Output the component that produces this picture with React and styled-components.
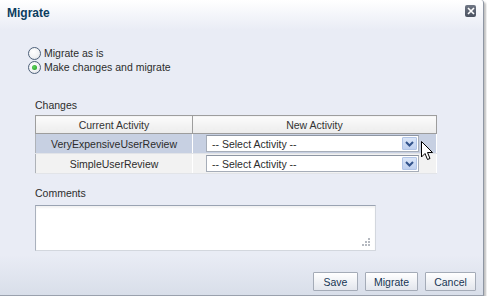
import React from "react";
import styled, { createGlobalStyle } from "styled-components";

const GlobalStyle = createGlobalStyle`
  html, body {
    margin: 0;
    padding: 0;
    background: #fff;
  }
  body {
    font-family: "Liberation Sans", Arial, sans-serif;
    font-size: 10.5px;
    color: #2c2c2c;
  }
`;

const Dialog = styled.div`
  position: relative;
  width: 484px;
  height: 296px;
  box-sizing: border-box;
  display: flex;
  flex-direction: column;
  background: linear-gradient(to bottom, #ffffff 0px, #e9ecf5 30px, #e9ecf5 255px, #d8dee9 296px);
  border-right: 1px solid #8e96a3;
  border-bottom: 1px solid #9aa1ad;
  border-top-right-radius: 3px;
  box-shadow: 2px 2px 2px rgba(0, 0, 0, 0.25);
`;

const TitleBar = styled.div`
  height: 28px;
  display: flex;
  align-items: center;
  justify-content: space-between;
  padding: 0 7px 3px 7px;
  box-sizing: border-box;
`;

const Title = styled.div`
  font-size: 12px;
  font-weight: bold;
  color: #0b3d5e;
`;

const CloseButton = styled.div`
  width: 11px;
  height: 12px;
  margin-top: -4px;
  border-radius: 2px;
  background: linear-gradient(to bottom, #6f7684, #4b5260);
  display: flex;
  align-items: center;
  justify-content: center;
`;

const Content = styled.div`
  padding-left: 28px;
  display: flex;
  flex-direction: column;
`;

const RadioList = styled.div`
  margin-top: 18px;
  display: flex;
  flex-direction: column;
`;

const RadioRow = styled.label`
  height: 14px;
  display: flex;
  align-items: center;
  gap: 3px;
`;

const RadioCircle = styled.span`
  width: 11px;
  height: 11px;
  border-radius: 50%;
  border: 1px solid #4d6079;
  background: radial-gradient(circle at 40% 35%, #ffffff 0%, #f1f2f4 55%, #d2d6de 100%);
  display: flex;
  align-items: center;
  justify-content: center;

  &::after {
    content: "";
    width: 5px;
    height: 5px;
    border-radius: 50%;
    background: ${(p) => (p.checked ? "radial-gradient(circle at 40% 40%, #5fd35f, #1f9a1f)" : "transparent")};
  }
`;

const Section = styled.div`
  margin-left: 7px;
  display: flex;
  flex-direction: column;
`;

const Label = styled.div`
  line-height: 14px;
  margin-top: ${(p) => p.top}px;
`;

const Grid = styled.table`
  margin-top: 3px;
  width: 402px;
  border-collapse: collapse;
  border: 1px solid #aeb2b8;
`;

const Th = styled.th`
  height: 17px;
  padding: 0;
  font-weight: normal;
  text-align: center;
  color: #333;
  background: linear-gradient(to bottom, #fbfbfb, #ececec);
  border: 1px solid #9d9d9d;
  width: ${(p) => p.width}px;
`;

const Td = styled.td`
  height: 19px;
  padding: 0;
  text-align: center;
  background: ${(p) => (p.selected ? "#c7d0e2" : "#f2f2f2")};
  border-right: 1px solid #ffffff;
  border-bottom: 1px solid #e2e4e8;
`;

const SelectCell = styled.div`
  display: flex;
  padding: 0 17px 0 13px;
`;

const SelectBox = styled.div`
  flex: 1;
  height: 17px;
  box-sizing: border-box;
  display: flex;
  align-items: center;
  justify-content: space-between;
  padding: 0 1px 0 5px;
  background: #fff;
  border: 1px solid #a6adb8;
  border-top-color: #8e96a3;
  text-align: left;
`;

const ArrowButton = styled.span`
  width: 15px;
  height: 13px;
  box-sizing: border-box;
  border: 1px solid #b1c4e6;
  border-radius: 1px;
  background: linear-gradient(to bottom, #dbe6f8, #bfd0ef);
  display: flex;
  align-items: center;
  justify-content: center;
`;

const TextArea = styled.div`
  position: relative;
  margin-top: 5px;
  width: 341px;
  height: 46px;
  box-sizing: border-box;
  background: #fff;
  border: 1px solid #d3d7de;
  border-top-color: #9aa3b2;
  border-left-color: #aab1bd;
  box-shadow: inset 0 2px 2px rgba(0, 0, 0, 0.05);
`;

const Grip = styled.svg`
  position: absolute;
  right: 5px;
  bottom: 4px;
`;

const Footer = styled.div`
  margin-top: auto;
  display: flex;
  justify-content: flex-end;
  gap: 7px;
  padding: 0 7px 4px 0;
`;

const Button = styled.button`
  width: ${(p) => p.w}px;
  height: 19px;
  padding: 0;
  font-family: "Liberation Sans", Arial, sans-serif;
  font-size: 10.5px;
  color: #163553;
  background: linear-gradient(to bottom, #ffffff, #eef0f4 60%, #e3e6ed);
  border: 1px solid #a4abb7;
  border-radius: 1px;
`;

const Cursor = styled.svg`
  position: absolute;
  left: 421px;
  top: 141px;
`;

const Chevron = () => (
  <svg width="9" height="6" viewBox="0 0 9 6">
    <path d="M1 1 L4.5 4.5 L8 1" fill="none" stroke="#33548c" strokeWidth="2" />
  </svg>
);

const rows = [
  { name: "VeryExpensiveUserReview", selected: true },
  { name: "SimpleUserReview", selected: false },
];

export default function App() {
  return (
    <>
      <GlobalStyle />
      <Dialog>
        <TitleBar>
          <Title>Migrate</Title>
          <CloseButton>
            <svg width="8" height="8" viewBox="0 0 8 8">
              <path d="M1 1 L7 7 M7 1 L1 7" stroke="#fff" strokeWidth="1.6" />
            </svg>
          </CloseButton>
        </TitleBar>
        <Content>
          <RadioList>
            <RadioRow>
              <RadioCircle />
              Migrate as is
            </RadioRow>
            <RadioRow>
              <RadioCircle checked />
              Make changes and migrate
            </RadioRow>
          </RadioList>
          <Section>
            <Label top={24}>Changes</Label>
            <Grid>
              <thead>
                <tr>
                  <Th width={156}>Current Activity</Th>
                  <Th>New Activity</Th>
                </tr>
              </thead>
              <tbody>
                {rows.map((r) => (
                  <tr key={r.name}>
                    <Td selected={r.selected}>{r.name}</Td>
                    <Td selected={r.selected}>
                      <SelectCell>
                        <SelectBox>
                          -- Select Activity --
                          <ArrowButton>
                            <Chevron />
                          </ArrowButton>
                        </SelectBox>
                      </SelectCell>
                    </Td>
                  </tr>
                ))}
              </tbody>
            </Grid>
            <Label top={12}>Comments</Label>
            <TextArea>
              <Grip width="8" height="8" viewBox="0 0 8 8">
                <rect x="6" y="0" width="2" height="2" fill="#b5b9c0" />
                <rect x="3" y="3" width="2" height="2" fill="#b5b9c0" />
                <rect x="6" y="3" width="2" height="2" fill="#b5b9c0" />
                <rect x="0" y="6" width="2" height="2" fill="#b5b9c0" />
                <rect x="3" y="6" width="2" height="2" fill="#b5b9c0" />
                <rect x="6" y="6" width="2" height="2" fill="#b5b9c0" />
              </Grip>
            </TextArea>
          </Section>
        </Content>
        <Footer>
          <Button w={45}>Save</Button>
          <Button w={53}>Migrate</Button>
          <Button w={51}>Cancel</Button>
        </Footer>
        <Cursor width="13" height="20" viewBox="0 0 13 20">
          <path
            d="M0.5 0.5 L0.5 16 L4 12.5 L6.5 18.5 L9 17.5 L6.5 11.5 L11.5 11.5 Z"
            fill="#fff"
            stroke="#000"
            strokeWidth="1"
            strokeLinejoin="miter"
          />
        </Cursor>
      </Dialog>
    </>
  );
}
